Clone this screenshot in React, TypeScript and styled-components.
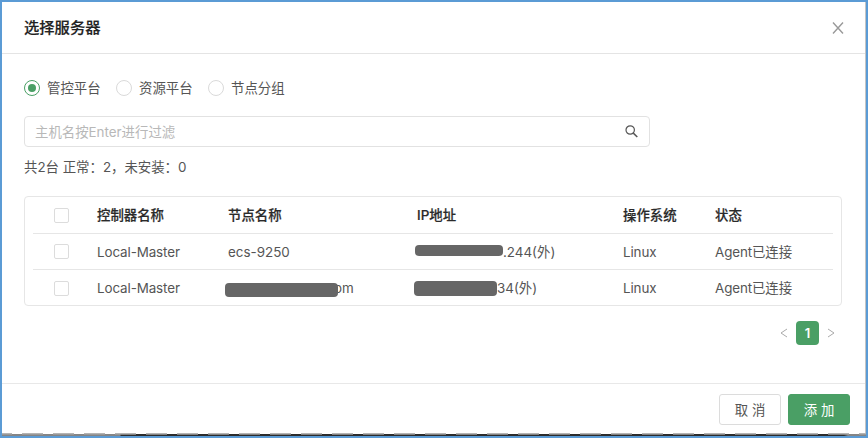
import React from "react";
import styled, { createGlobalStyle } from "styled-components";

const GlobalStyle = createGlobalStyle`
  * { box-sizing: border-box; }
  body {
    margin: 0;
    background: #fff;
    font-family: Inter, "Noto Sans CJK SC", sans-serif;
    font-size: 13.4px;
    line-height: 20px;
    color: #555;
  }
`;

const Frame = styled.div`
  width: 868px;
  height: 438px;
  border: 2px solid #5b9bd5;
  background: #fff;
  display: flex;
  flex-direction: column;
`;

const Dialog = styled.div`
  flex: 1;
  display: flex;
  flex-direction: column;
  border-right: 1px solid #c4c4c4;
`;

const Header = styled.header`
  height: 52px;
  flex: none;
  padding: 0 21px 0 22px;
  border-bottom: 1px solid #e4e4e4;
  display: flex;
  align-items: center;
  justify-content: space-between;
`;

const Title = styled.h1`
  margin: 0;
  font-size: 15.3px;
  font-weight: 500;
  color: #222;
  -webkit-text-stroke: 0.2px #222;
`;

const Body = styled.main`
  flex: 1;
  padding: 23px 23px 0 22px;
`;

const RadioGroup = styled.div`
  display: flex;
  gap: 16px;
  height: 21px;
  align-items: center;
`;

const RadioLabel = styled.label`
  display: flex;
  align-items: center;
  gap: 7px;
  width: 76px;
  white-space: nowrap;
`;

const RadioMark = styled.span<{ $on?: boolean }>`
  width: 16px;
  height: 16px;
  flex: none;
  border-radius: 50%;
  border: 1px solid ${(p) => (p.$on ? "#4a9f65" : "#dadada")};
  display: flex;
  align-items: center;
  justify-content: center;
  &::after {
    content: "";
    width: 8px;
    height: 8px;
    border-radius: 50%;
    background: ${(p) => (p.$on ? "#4a9f65" : "transparent")};
  }
`;

const Search = styled.div`
  width: 626px;
  height: 31px;
  margin-top: 18px;
  padding: 0 11px 0 10px;
  border: 1px solid #e2e2e2;
  border-radius: 4px;
  display: flex;
  align-items: center;
  justify-content: space-between;
  color: #b8b8b8;
`;

const Summary = styled.p`
  margin: 10px 0 19px;
  white-space: pre;
`;

const Table = styled.div`
  height: 110px;
  padding: 0 8px;
  border: 1px solid #e6e6e6;
  border-radius: 4px;
`;

const Row = styled.div<{ $head?: boolean }>`
  display: grid;
  grid-template-columns: 64px 131px 189px 206px 92px 1fr;
  align-items: center;
  height: ${(p) => (p.$head ? "37px" : "36px")};
  font-weight: ${(p) => (p.$head ? 500 : 400)};
  color: ${(p) => (p.$head ? "#2a2a2a" : "#555")};
  -webkit-text-stroke: ${(p) => (p.$head ? "0.2px #2a2a2a" : "0")};
  border-bottom: 1px solid #e6e6e6;
  &:last-child { border-bottom: 0; }
`;

const Cell = styled.div`
  display: flex;
  align-items: center;
  white-space: nowrap;
`;

const LatinCell = styled(Cell)`
  letter-spacing: -0.1px;
`;

const Checkbox = styled.span`
  width: 15px;
  height: 15px;
  margin-left: 21px;
  border: 1px solid #dcdcdc;
  border-radius: 2px;
`;

const Redaction = styled.span<{ $w: number; $h: number; $left: number; $right?: number; $top?: number }>`
  width: ${(p) => p.$w}px;
  height: ${(p) => p.$h}px;
  flex: none;
  margin: ${(p) => p.$top ?? 0}px ${(p) => p.$right ?? 0}px 0 ${(p) => p.$left}px;
  border-radius: 4px;
  background: #666;
  z-index: 1;
`;

const Pagination = styled.nav`
  margin-top: 15px;
  padding-right: 7px;
  display: flex;
  align-items: center;
  justify-content: flex-end;
  gap: 8px;
`;

const Page = styled.span`
  width: 23px;
  height: 24px;
  border-radius: 4px;
  background: #4a9f65;
  color: #fff;
  font-weight: 600;
  font-size: 13px;
  line-height: 24px;
  text-align: center;
`;

const Footer = styled.footer`
  height: 50px;
  flex: none;
  padding: 10px 15px 0 0;
  border-top: 1px solid #e8e8e8;
  display: flex;
  justify-content: flex-end;
  gap: 7px;
`;

const Button = styled.button<{ $primary?: boolean }>`
  width: 62px;
  height: 31px;
  padding: 0;
  border: 1px solid ${(p) => (p.$primary ? "#4a9f65" : "#dcdcdc")};
  border-radius: 3px;
  background: ${(p) => (p.$primary ? "#4a9f65" : "#fff")};
  color: ${(p) => (p.$primary ? "#fff" : "#555")};
  font: inherit;
  white-space: pre;
`;

const Backdrop = styled.div`
  height: 3px;
  flex: none;
  background:
    repeating-linear-gradient(to right, #b4b4b4 0 10px, transparent 10px 20px, #b4b4b4 20px 31px) 0 0 / 100% 1px no-repeat,
    repeating-linear-gradient(to right, rgba(160, 160, 160, 0.75) 0 10px, transparent 10px 20px, rgba(160, 160, 160, 0.75) 20px 31px) 0 1px / 100% 1px no-repeat,
    linear-gradient(to right, #858585 118px, #2c2c2c 119px, #2c2c2c 842px, #858585 846px) 0 1px / 100% 2px no-repeat;
`;

const Arrow = ({ next }: { next?: boolean }) => (
  <svg width="8" height="10" viewBox="0 0 8 10" fill="none" stroke="#aaa" strokeWidth="1">
    <path d={next ? "M1 1L7 5L1 9" : "M7 1L1 5L7 9"} />
  </svg>
);

const radios = ["管控平台", "资源平台", "节点分组"];
const columns = ["控制器名称", "节点名称", "IP地址", "操作系统", "状态"];
const rows = [
  {
    node: <>ecs-9250</>,
    ip: <><Redaction $w={88} $h={11} $left={-2} $top={-2} />.244(外)</>,
  },
  {
    node: <><Redaction $w={113} $h={14} $left={-3} $right={-4} $top={3} />om</>,
    ip: <><Redaction $w={83} $h={15} $left={-3} $top={1} />34(外)</>,
  },
];

export default function App() {
  return (
    <>
      <GlobalStyle />
      <Frame>
        <Dialog>
          <Header>
            <Title>选择服务器</Title>
            <svg width="12" height="12" viewBox="0 0 12 12" stroke="#999" strokeWidth="1.4">
              <path d="M1 .5L11 11.5M11 .5L1 11.5" />
            </svg>
          </Header>
          <Body>
            <RadioGroup>
              {radios.map((label, i) => (
                <RadioLabel key={label}>
                  <RadioMark $on={i === 0} />
                  {label}
                </RadioLabel>
              ))}
            </RadioGroup>
            <Search>
              主机名按Enter进行过滤
              <svg width="13" height="13" viewBox="0 0 13 13" fill="none" stroke="#555" strokeWidth="1.2">
                <circle cx="5.2" cy="5" r="4.2" />
                <path d="M8.3 8.1L12.3 12" strokeWidth="1.5" />
              </svg>
            </Search>
            <Summary>共2台 正常：2，未安装：0</Summary>
            <Table>
              <Row $head>
                <Cell><Checkbox /></Cell>
                {columns.map((name) => <Cell key={name}>{name}</Cell>)}
              </Row>
              {rows.map((row, i) => (
                <Row key={i}>
                  <Cell><Checkbox /></Cell>
                  <LatinCell>Local-Master</LatinCell>
                  <Cell>{row.node}</Cell>
                  <Cell>{row.ip}</Cell>
                  <LatinCell>Linux</LatinCell>
                  <LatinCell>Agent已连接</LatinCell>
                </Row>
              ))}
            </Table>
            <Pagination>
              <Arrow />
              <Page>1</Page>
              <Arrow next />
            </Pagination>
          </Body>
          <Footer>
            <Button>取 消</Button>
            <Button $primary>添 加</Button>
          </Footer>
        </Dialog>
        <Backdrop />
      </Frame>
    </>
  );
}
